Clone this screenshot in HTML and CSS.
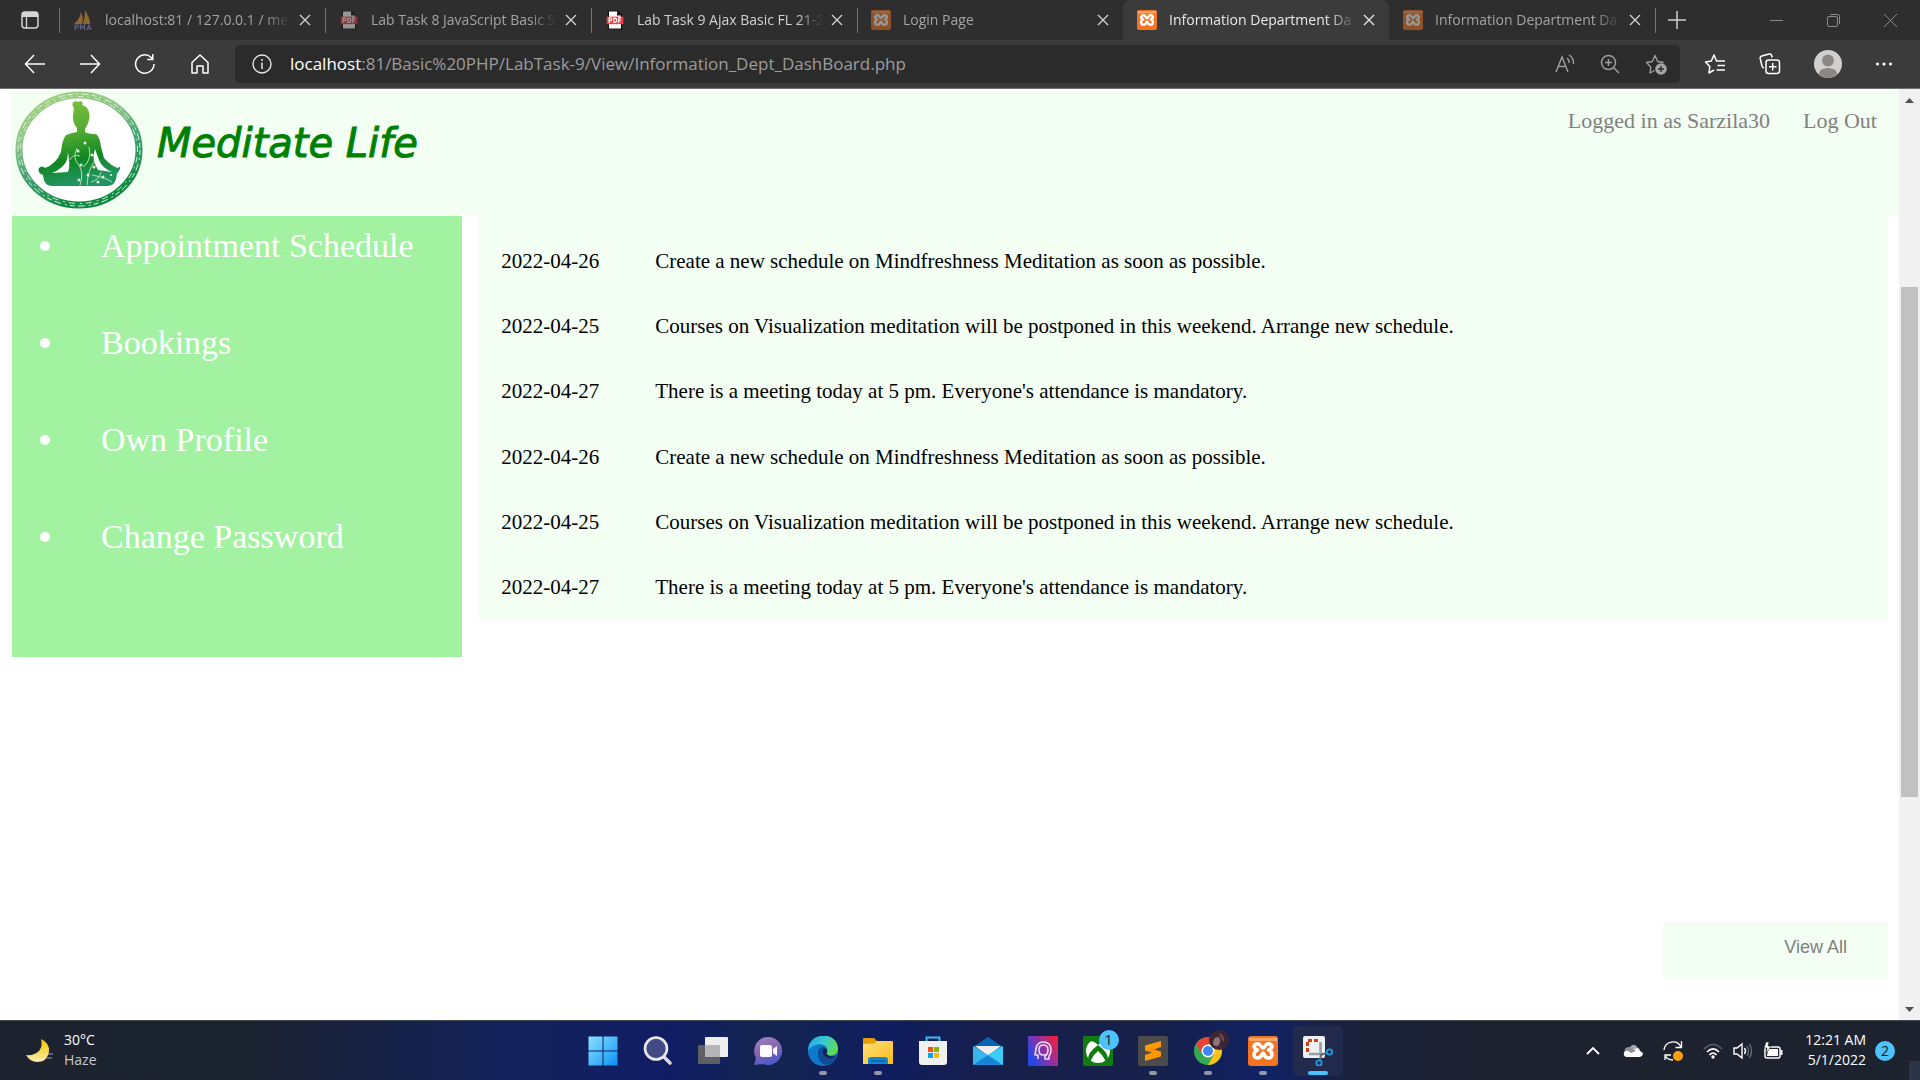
FILE: index.html
```html
<!DOCTYPE html>
<html lang="en">
<head>
<meta charset="utf-8">
<title>Information Department DashBoard</title>
<link rel="stylesheet" href="styles.css">
</head>
<body>
<svg class="sprite" aria-hidden="true">
  <symbol id="close" viewBox="0 0 12 12"><path d="M1 1l10 10M11 1L1 11" fill="none" stroke="currentColor" stroke-width="1.3"/></symbol>
  <symbol id="pdf" viewBox="0 0 20 24"><path d="M2 1h11l5 5v17H2z" fill="#fff" stroke="#111" stroke-width="1.6"/><path d="M12.500 1v5.500H18z" fill="#111"/><path d="M0 8h20v9H0z" fill="#f63a3d"/><path d="M3 15.500v-6h1.500a1.500 1.500 0 010 3.300H3M8.500 9.800v5h1a2 2 0 000-5zM14.500 15.500v-6h3M14.500 12.300h2.500" fill="none" stroke="#fff" stroke-width="1.400"/></symbol>
  <symbol id="xampp" viewBox="0 0 30 30"><rect width="30" height="30" rx="3" fill="#f47521"/><path d="M1 2h28v3H1z" fill="#fda768"/><path d="M8.500 8c-4.500 2-1.500 5.500 1 6-4 .8-5 8 0 8s4-5 5.500-5 .5 5 5.500 5 4-7.200 0-8c2.500-.5 5.500-4 1-6-4-1.500-4.500 4-6.500 4s-2.500-5.500-6.500-4z" fill="#f47521" stroke="#fff" stroke-width="3.600" stroke-linejoin="round"/></symbol>
</svg>

<header class="tabstrip">
  <button class="icon-btn tab-actions" aria-label="Tab actions"><svg width="20" height="20" viewBox="0 0 20 20"><rect x="2" y="2" width="16" height="16" rx="3" fill="none" stroke="#d6d6d6" stroke-width="1.500"/><path d="M2 7V4.500A2.500 2.500 0 014.500 2h11A2.500 2.500 0 0118 4.500V7z" fill="#d6d6d6"/><path d="M6.500 7v11" stroke="#d6d6d6" stroke-width="1.300"/></svg></button>
  <div class="tab tab-line dim">
    <svg class="favicon" viewBox="0 0 20 20"><path d="M1 14Q7 9 8 2q3 7 1 12zM10 14q2-7 2-14 5 8 5 14z" fill="#f0a030"/><path d="M2 20v-5h3v2.500H2M7.500 20v-5l2 3 2-3v5M14 20l2-5 2 5M15 18.500h3" fill="none" stroke="#8d90d0" stroke-width="1.200"/></svg>
    <span class="tab-title">localhost:81 / 127.0.0.1 / me</span>
    <button class="icon-btn close" aria-label="Close tab"><svg><use href="#close"/></svg></button>
  </div>
  <div class="tab tab-line dim">
    <svg class="favicon"><use href="#pdf"/></svg>
    <span class="tab-title">Lab Task 8 JavaScript Basic S</span>
    <button class="icon-btn close" aria-label="Close tab"><svg><use href="#close"/></svg></button>
  </div>
  <div class="tab tab-line">
    <svg class="favicon"><use href="#pdf"/></svg>
    <span class="tab-title">Lab Task 9 Ajax Basic FL 21-2</span>
    <button class="icon-btn close" aria-label="Close tab"><svg><use href="#close"/></svg></button>
  </div>
  <div class="tab tab-line dim">
    <svg class="favicon"><use href="#xampp"/></svg>
    <span class="tab-title">Login Page</span>
    <button class="icon-btn close" aria-label="Close tab"><svg><use href="#close"/></svg></button>
  </div>
  <div class="tab active">
    <svg class="favicon"><use href="#xampp"/></svg>
    <span class="tab-title">Information Department Da</span>
    <button class="icon-btn close" aria-label="Close tab"><svg><use href="#close"/></svg></button>
  </div>
  <div class="tab dim">
    <svg class="favicon"><use href="#xampp"/></svg>
    <span class="tab-title">Information Department Da</span>
    <button class="icon-btn close" aria-label="Close tab"><svg><use href="#close"/></svg></button>
  </div>
  <button class="icon-btn new-tab" aria-label="New tab"><svg width="18" height="18"><path d="M9 0v18M0 9h18" stroke="#d0d0d0" stroke-width="1.500"/></svg></button>
  <div class="window-controls">
    <button class="icon-btn" aria-label="Minimize"><svg width="13" height="13"><path d="M0 6.500h13" stroke="#8a8a8a"/></svg></button>
    <button class="icon-btn" aria-label="Restore"><svg width="13" height="13"><rect x=".5" y="2.500" width="10" height="10" rx="1.500" fill="none" stroke="#8a8a8a"/><path d="M3 .5h7.500q2 0 2 2V10" fill="none" stroke="#8a8a8a"/></svg></button>
    <button class="icon-btn" aria-label="Close"><svg width="13" height="13"><path d="M0 0l13 13M13 0L0 13" stroke="#8a8a8a"/></svg></button>
  </div>
</header>

<nav class="toolbar" aria-label="Browser">
  <button class="icon-btn nav-btn" aria-label="Back"><svg width="22" height="20"><path d="M21 10H1.500M10 1L1.500 10l8.500 9" fill="none" stroke="#fff" stroke-width="1.500"/></svg></button>
  <button class="icon-btn nav-btn" aria-label="Forward"><svg width="22" height="20"><path d="M1 10h19.500M12 1l8.500 9-8.500 9" fill="none" stroke="#fff" stroke-width="1.500"/></svg></button>
  <button class="icon-btn nav-btn" aria-label="Refresh"><svg width="22" height="22"><path d="M20 11a9.200 9.200 0 11-3-6.800L18.500 6M18.800 1v5.500h-5.500" fill="none" stroke="#fff" stroke-width="1.500"/></svg></button>
  <button class="icon-btn nav-btn" aria-label="Home"><svg width="20" height="22"><path d="M2 9.500L10 2l8 7.500V20h-5v-7H7v7H2z" fill="none" stroke="#fff" stroke-width="1.500" stroke-linejoin="round"/></svg></button>
  <div class="address">
    <button class="icon-btn" aria-label="Site information"><svg width="20" height="20"><circle cx="10" cy="10" r="9" fill="none" stroke="#e4e4e4" stroke-width="1.400"/><path d="M10 8.500V15M10 5v2" stroke="#e4e4e4" stroke-width="1.500"/></svg></button>
    <label class="host" for="url">localhost</label>
    <input class="url" id="url" value=":81/Basic%20PHP/LabTask-9/View/Information_Dept_DashBoard.php">
    <div class="address-tools">
      <button class="icon-btn" aria-label="Read aloud"><svg width="20" height="20"><path d="M1 18L7 3l6 15M3.500 12.500h7M12 4q2.500 2 2 5M14 1q5 3 4.500 9" fill="none" stroke="#9d9d9d" stroke-width="1.400"/></svg></button>
      <button class="icon-btn" aria-label="Zoom"><svg width="20" height="20"><circle cx="8.500" cy="8.500" r="7" fill="none" stroke="#9d9d9d" stroke-width="1.500"/><path d="M13.500 13.500L19 19M8.500 5v7M5 8.500h7" stroke="#9d9d9d" stroke-width="1.500"/></svg></button>
      <button class="icon-btn" aria-label="Add to favorites"><svg width="22" height="22"><path d="M9.500 17.500L5 20l.8-5.800L1.500 9.500l5.800-1L10 2.500l2.700 6 6 1" fill="none" stroke="#9d9d9d" stroke-width="1.400" stroke-linejoin="round"/><circle cx="16" cy="16" r="5.800" fill="#a5a5a5"/><path d="M16 13v6M13 16h6" stroke="#2b2b2b" stroke-width="1.400"/></svg></button>
    </div>
  </div>
  <div class="toolbar-tools">
    <button class="icon-btn" aria-label="Favorites"><svg width="22" height="22"><path d="M13.500 8H12.500L10 2 7.300 8 1.500 9l4.300 4.500L5 20l5-3M12.500 8H21M13.500 12.500H21M12.500 17H21" fill="none" stroke="#fff" stroke-width="1.500" stroke-linejoin="round"/></svg></button>
    <button class="icon-btn" aria-label="Collections"><svg width="22" height="22"><rect x="7" y="7" width="13.500" height="13.500" rx="2.500" fill="none" stroke="#fff" stroke-width="1.500"/><path d="M13.700 10v7.500M10 13.700h7.500M5 15q-1.500-.5-2-2L1.200 5.500q-.4-2 1.500-2.500l7.500-2q2-.3 2.500 1.500l.5 2" fill="none" stroke="#fff" stroke-width="1.500"/></svg></button>
    <button class="icon-btn" aria-label="Profile"><svg width="28" height="28"><circle cx="14" cy="14" r="14" fill="#d2d0ce"/><circle cx="14" cy="10.500" r="6" fill="#8b8785"/><path d="M4.500 24q1.500-6 9.500-6t9.500 6Q19 28 14 28t-9.500-4z" fill="#8b8785"/></svg></button>
    <button class="icon-btn" aria-label="Settings and more"><svg width="18" height="4"><g fill="#fff"><circle cx="2.500" cy="2" r="1.600"/><circle cx="9" cy="2" r="1.600"/><circle cx="15.500" cy="2" r="1.600"/></g></svg></button>
  </div>
</nav>

<div class="viewport">
  <div class="page">
    <header class="site-header">
      <svg class="logo" width="128" height="118" viewBox="0 0 128 118">
        <defs>
          <linearGradient id="ring" x1="0" y1="0" x2=".4" y2="1"><stop offset="0" stop-color="#a3d67c"/><stop offset=".4" stop-color="#8cc38a"/><stop offset=".65" stop-color="#41a374"/><stop offset="1" stop-color="#108a40"/></linearGradient>
          <linearGradient id="figure" x1="0" y1="0" x2=".2" y2="1"><stop offset="0" stop-color="#83c340"/><stop offset=".45" stop-color="#4faa32"/><stop offset=".75" stop-color="#108622"/><stop offset="1" stop-color="#219561"/></linearGradient>
        </defs>
        <ellipse cx="64" cy="59" rx="60" ry="55" fill="#fff" stroke="url(#ring)" stroke-width="7"/>
        <ellipse cx="64" cy="59" rx="61" ry="56" fill="none" stroke="#e0f3df" stroke-width="1" stroke-dasharray="5 3 2 4 7 3"/>
        <ellipse cx="64" cy="59" rx="58.500" ry="53.500" fill="none" stroke="#d3ecd5" stroke-width="1" stroke-dasharray="2 5 6 4"/>
        <path d="M59 17C55 12 60 9 63 11 66 9 69 12 67 14 75 16 76 26 73 32 72 35 71 36 70 38V41Q73 43 81 43 85 46 86 56L89 67Q96 75 103 77 106 74 105 78L102 83Q101 95 93 95H36Q29 95 28 84 22 82 24 77 27 74 30 77 41 73 46 61 47 49 51 44 56 42 62 41V37Q57 31 58 24z" fill="url(#figure)"/>
        <path d="M52 57q2 7-1 14-4 7-14 11l16-1q3-7-1-24zM80 58q-3 9 0 15l3 6 14 2q-10-4-13-12z" fill="#fff"/>
        <path d="M65 94q4-12-1-20-7-6-2-17M72 94q1-15 7-23M76 91q8-2 10-10M68 76q9-6 6-20M65 65q-8-2-10 4M77 84q15 3 20 7" fill="none" stroke="#b7dfad" stroke-width="1"/>
        <g fill="#e4f6df"><circle cx="70" cy="52" r="1.500"/><circle cx="63" cy="60" r="1.500"/><circle cx="77" cy="64" r="1.500"/><circle cx="66" cy="74" r="1.500"/><circle cx="79" cy="76" r="1.500"/><circle cx="73" cy="84" r="1.500"/><circle cx="88" cy="86" r="1.500"/><circle cx="64" cy="89" r="1.500"/><circle cx="83" cy="91" r="1.500"/><circle cx="96" cy="84" r="1"/></g>
      </svg>
      <h1 class="brand">Meditate Life</h1>
      <div class="account">
        <a href="#profile">Logged in as Sarzila30</a>
        <a href="#logout">Log Out</a>
      </div>
    </header>
    <div class="columns">
      <ul class="menu">
        <li><a href="#schedule">Appointment Schedule</a></li>
        <li><a href="#bookings">Bookings</a></li>
        <li><a href="#own">Own Profile</a></li>
        <li><a href="#password">Change Password</a></li>
      </ul>
      <main class="notices">
        <table>
          <tbody>
          <tr><td class="date">2022-04-26</td><td>Create a new schedule on Mindfreshness Meditation as soon as possible.</td></tr>
          <tr><td class="date">2022-04-25</td><td>Courses on Visualization meditation will be postponed in this weekend. Arrange new schedule.</td></tr>
          <tr><td class="date">2022-04-27</td><td>There is a meeting today at 5 pm. Everyone's attendance is mandatory.</td></tr>
          <tr><td class="date">2022-04-26</td><td>Create a new schedule on Mindfreshness Meditation as soon as possible.</td></tr>
          <tr><td class="date">2022-04-25</td><td>Courses on Visualization meditation will be postponed in this weekend. Arrange new schedule.</td></tr>
          <tr><td class="date">2022-04-27</td><td>There is a meeting today at 5 pm. Everyone's attendance is mandatory.</td></tr>
          </tbody>
        </table>
      </main>
    </div>
    <button class="view-all">View All</button>
  </div>
  <div class="scrollbar" aria-hidden="true">
    <svg viewBox="0 0 21 21"><path d="M6 14h9l-4.500-5z" fill="#505050"/></svg>
    <div class="track-above"></div>
    <div class="thumb"></div>
    <div class="track-below"></div>
    <svg viewBox="0 0 21 21"><path d="M6 8h9l-4.500 5z" fill="#505050"/></svg>
  </div>
</div>

<footer class="taskbar">
  <button class="weather">
    <svg width="28" height="26" viewBox="0 0 28 26"><defs><linearGradient id="moon" x1="0" y1="0" x2="0" y2="1"><stop offset="0" stop-color="#fbc60a"/><stop offset=".5" stop-color="#f9d84d"/><stop offset="1" stop-color="#ffedb5"/></linearGradient></defs><path d="M20 16h7M19 20h7" stroke="#566275" stroke-width="2"/><path d="M15 1q9 4 8 13-2 10-12 10-7 0-11-7 8 1 13-4 4-5 2-12z" fill="url(#moon)"/></svg>
    <span class="weather-text"><span>30°C</span><span class="haze">Haze</span></span>
  </button>
  <div class="apps">
    <button class="app" aria-label="Start"><svg viewBox="0 0 30 30"><defs><linearGradient id="win" x1="0" y1="0" x2="1" y2="1"><stop offset="0" stop-color="#8be4ff"/><stop offset="1" stop-color="#0c90f4"/></linearGradient></defs><path d="M.5.500h14v14h-14zM15.500.500h14v14h-14zM.5 15.500h14v14h-14zM15.500 15.500h14v14h-14z" fill="url(#win)"/></svg></button>
    <button class="app" aria-label="Search"><svg viewBox="0 0 30 30"><path d="M20 20l7 7" stroke="#d9d9de" stroke-width="3.600" stroke-linecap="round"/><circle cx="13" cy="12.500" r="11" fill="#414a83" stroke="#e8e8ea" stroke-width="2.600"/></svg></button>
    <button class="app" aria-label="Task view"><svg viewBox="0 0 30 30"><rect x="0" y="9" width="22" height="19" rx="1" fill="#5d6067"/><rect x="7" y="1" width="23" height="20" rx="1" fill="#eee"/><path d="M7 9h15v12H7z" fill="#b5b5b7"/></svg></button>
    <button class="app" aria-label="Chat"><svg viewBox="0 0 30 30"><defs><linearGradient id="chat" x1="0" y1="0" x2=".4" y2="1"><stop offset="0" stop-color="#8e8bd6"/><stop offset=".4" stop-color="#956bae"/><stop offset="1" stop-color="#5059c9"/></linearGradient></defs><path d="M1 29l2-7A14 14 0 1110 28z" fill="url(#chat)"/><rect x="7" y="9" width="12" height="12" rx="2" fill="#fff"/><path d="M20 13l4-3v10l-4-3z" fill="#fff"/></svg></button>
    <button class="app running" aria-label="Microsoft Edge"><svg viewBox="0 0 30 30"><defs><linearGradient id="edge" x1="0" y1=".2" x2="1" y2=".6"><stop offset="0" stop-color="#23a9e8"/><stop offset=".5" stop-color="#35c9cf"/><stop offset="1" stop-color="#65dd4a"/></linearGradient></defs><circle cx="15" cy="15" r="15" fill="#0d79cb"/><path d="M0 14C1-5 30-5 30 13c0 8-13 8-11 4 3-9-10-13-19-3z" fill="url(#edge)"/><path d="M10 17c0-5 5-8 8-5-3-1-4 4-3 6 2 4 8 5 14 2-5 12-19 12-19-3z" fill="#114a96"/><path d="M15.500 12q5 0 3 6 4 4 11 1-7 6-13 1-3-3-1-8z" fill="#122252"/></svg></button>
    <button class="app running" aria-label="File Explorer"><svg viewBox="0 0 30 30"><defs><linearGradient id="folder" x1="0" y1="0" x2="1" y2="1"><stop offset="0" stop-color="#ffe07a"/><stop offset="1" stop-color="#ffbd1b"/></linearGradient></defs><path d="M0 3q0-1 1-1h10l3 3v6H0z" fill="#e69e00"/><path d="M0 8l11-.500 3-2.500h15q1 0 1 1v22H0z" fill="url(#folder)"/><path d="M5 28v-4q0-3 3-3h14q3 0 3 3v4z" fill="#1385d1"/><path d="M8 25h14" stroke="#0765a8" stroke-width="1.500"/></svg></button>
    <button class="app" aria-label="Microsoft Store"><svg viewBox="0 0 30 30"><path d="M8.500 6V1.500h13V6" fill="none" stroke="#35bdf3" stroke-width="2"/><path d="M1 5h28v21q0 3-3 3H4q-3 0-3-3z" fill="#f0f0f1"/><path d="M10 11h5v5h-5z" fill="#f25022"/><path d="M16 11h5v5h-5z" fill="#7fba00"/><path d="M10 17h5v5h-5z" fill="#00a4ef"/><path d="M16 17h5v5h-5z" fill="#ffb900"/></svg></button>
    <button class="app" aria-label="Mail"><svg viewBox="0 0 30 30"><path d="M0 11L15 1l15 10v3H0z" fill="#0864b5"/><path d="M2 10h26L15 20z" fill="#eee"/><path d="M0 10l15 9 15-9v19H0z" fill="#37b6ee"/><path d="M0 29l15-10 15 10z" fill="#1783d6"/><path d="M30 10v19L15 19z" fill="#3bcdf8"/></svg></button>
    <button class="app" aria-label="Head app"><svg viewBox="0 0 30 30"><defs><linearGradient id="head" x1="0" y1=".6" x2="1" y2="0"><stop offset="0" stop-color="#2449e8"/><stop offset=".5" stop-color="#9a2da0"/><stop offset="1" stop-color="#ff2029"/></linearGradient></defs><path d="M0 0h30v30H0z" fill="url(#head)"/><path d="M10 23v-4H7l1-6q1-7 7-7 8 0 8 8 0 4-2 6v3h-4v-3q3-2 3-6 0-5-5-5-4 0-4 5t4 5h3" fill="none" stroke="#eadcf5" stroke-width="1.600" stroke-linejoin="round"/></svg></button>
    <button class="app" aria-label="Xbox"><svg viewBox="0 0 30 30"><rect width="30" height="30" rx="2" fill="#107c10"/><circle cx="15" cy="15" r="12" fill="#fff"/><path d="M7 5q4 0 8 4 4-4 8-4-4-3-8-3T7 5zM15 9q11 8 10 15-1 3-3 0-2-5-7-9-5 4-7 9-2 3-3 0Q4 17 15 9z" fill="#107c10"/></svg><span class="count">1</span></button>
    <button class="app running" aria-label="Sublime Text"><svg viewBox="0 0 30 30"><rect width="30" height="30" rx="2" fill="#4b4b4b"/><path d="M7 9.500L23 5v6l-7 2.500 7 2v5L7 25v-6l7-2.500-7-2z" fill="#ff9800"/></svg></button>
    <button class="app running" aria-label="Google Chrome"><svg viewBox="0 0 30 30"><circle cx="15" cy="15" r="14" fill="#34a853"/><path d="M3 8a14 14 0 0124.100 0H15L9 18z" fill="#ea4335"/><path d="M15 8h12.100A14 14 0 0115 29l6-11z" fill="#fbc116"/><circle cx="15" cy="15" r="6.500" fill="#fff"/><circle cx="15" cy="15" r="5" fill="#4285f4"/></svg><svg class="avatar" viewBox="0 0 20 20"><circle cx="10" cy="10" r="10" fill="#3c2632"/><path d="M4 14q0-7 5-7 4 2 1 8-3 3-6-1z" fill="#93717a"/><path d="M10 3q6 2 5 9-4-3-5-9z" fill="#6c474f"/></svg></button>
    <button class="app running" aria-label="XAMPP"><svg viewBox="0 0 30 30"><use href="#xampp"/></svg></button>
    <button class="app running current" aria-label="Snipping Tool"><svg viewBox="0 0 30 30"><rect width="22" height="22" rx="2" fill="#eef0f1"/><path d="M4.500 16V4.500H17" fill="none" stroke="#d83b12" stroke-width="3" stroke-dasharray="4 2"/><path d="M17.500 6v13M6 18h14" stroke="#9b9ea1" stroke-width="2.600"/><path d="M17 19l7-2M18 19l-1 5" stroke="#5a6b76" stroke-width="2"/><circle cx="26.500" cy="16" r="2.700" fill="none" stroke="#1e9ce4" stroke-width="1.800"/><circle cx="16" cy="27" r="2.700" fill="none" stroke="#1e9ce4" stroke-width="1.800"/></svg></button>
  </div>
  <div class="tray">
    <button class="icon-btn tray-app" aria-label="Show hidden icons"><svg width="14" height="10"><path d="M1 8l6-6 6 6" fill="none" stroke="#fff" stroke-width="1.800"/></svg></button>
    <button class="icon-btn tray-app" aria-label="OneDrive"><svg width="20" height="14"><path d="M4 10Q0 8 3 4q3-1 4-1 4-5 8 1l-8 6z" fill="#a5a8ad"/><path d="M3 13q-4-2-1-6 3-1 5 0l5-2q4-3 5 2 3 1 3 3-1 3-4 3z" fill="#fff"/><path d="M2 7q-1-2 1-3 3-1 4-1l6 4-5 2q-3-3-6-2z" fill="#8c9096"/></svg></button>
    <button class="icon-btn tray-app" aria-label="Sync"><svg width="22" height="22"><path d="M2 10a9 9 0 0117-3M19.500 1v6.500h-6M3 20v-5h6M3 15q2 5 8 5" fill="none" stroke="#fff" stroke-width="1.300"/><circle cx="16" cy="16" r="5" fill="#ff9d0a"/></svg></button>
    <button class="icon-btn status" aria-label="Network, volume and battery">
      <svg width="20" height="16"><path d="M1 6q9-9 18 0" fill="none" stroke="#596171" stroke-width="1.500"/><path d="M4 9q6-6 12 0M6.500 12q3.500-4 7 0" fill="none" stroke="#fff" stroke-width="1.700"/><circle cx="10" cy="14" r="1.700" fill="#fff"/></svg>
      <svg width="20" height="18"><path d="M1 6h3l5-4v14l-5-4H1z" fill="none" stroke="#fff" stroke-width="1.400"/><path d="M11.500 6q2 3 0 6" fill="none" stroke="#fff" stroke-width="1.400"/><path d="M14 4q3 5 0 10M16.500 2q4 7 0 14" fill="none" stroke="#687080" stroke-width="1.300"/></svg>
      <svg width="20" height="18"><rect x="2" y="5" width="15" height="11" rx="2" fill="none" stroke="#fff" stroke-width="1.500"/><path d="M5 7h10v7H4z" fill="#fff"/><path d="M18.500 8v5" stroke="#fff" stroke-width="2"/><path d="M3 0L1 6h3l-1 6 5-8H5l1-4z" fill="#fff" stroke="#1c222e" stroke-width=".6"/></svg>
    </button>
    <div class="clock"><span>12:21 AM</span><span>5/1/2022</span></div>
    <span class="notifications">2</span>
    <button class="show-desktop" aria-label="Show desktop"></button>
  </div>
</footer>
</body>
</html>
```

FILE: styles.css
```css
* { box-sizing: border-box; }

body {
  margin: 0;
  min-height: 100vh;
  display: flex;
  flex-direction: column;
  background: #fff;
  font-family: "Segoe UI", "Open Sans", sans-serif;
}

button { border: 0; padding: 0; background: none; font: inherit; color: inherit; }
a { color: inherit; text-decoration: none; }
svg { display: block; flex: none; }
.sprite { position: absolute; width: 0; height: 0; }
.icon-btn { display: flex; align-items: center; justify-content: center; flex: none; }

/* Tab strip */
.tabstrip { display: flex; height: 40px; background: #2e2e2e; color: #d2d2d2; font-size: 14px; }
.tab-actions { width: 59px; }
.tab {
  display: flex;
  align-items: center;
  flex: 0 1 266px;
  min-width: 0;
  padding: 0 14px;
  position: relative;
}
.tab-line::before, .new-tab::before {
  content: "";
  position: absolute;
  left: 0;
  top: 8px;
  width: 1px;
  height: 25px;
  background: #757575;
}
.favicon { width: 20px; height: 20px; margin-right: 12px; }
.dim .favicon { opacity: .5; }
.dim .tab-title { color: #a3a3a3; }
.tab-title {
  flex: 1;
  min-width: 0;
  overflow: hidden;
  white-space: nowrap;
  line-height: 20px;
  -webkit-mask-image: linear-gradient(to right, #000 86%, transparent);
  mask-image: linear-gradient(to right, #000 86%, transparent);
}
.close { width: 12px; height: 12px; margin-left: 8px; }
.close svg { width: 12px; height: 12px; }
.active { background: #3b3b3b; border-radius: 8px 8px 0 0; color: #e8e8e8; }
.new-tab { position: relative; width: 44px; }
.window-controls { display: flex; margin-left: auto; padding-right: 1px; }
.window-controls button { width: 57px; }

/* Toolbar */
.toolbar {
  display: flex;
  align-items: center;
  height: 49px;
  padding-left: 7px;
  background: #3b3b3b;
  border-bottom: 1px solid #707070;
}
.nav-btn { width: 55px; }
.address {
  display: flex;
  align-items: center;
  flex: 1;
  height: 38px;
  margin-left: 8px;
  padding: 0 13px 0 17px;
  border-radius: 5px;
  background: #2b2b2b;
  font-size: 17px;
  line-height: 24px;
}
.host, .url { padding: 0 0 1px; }
.host { margin-left: 18px; color: #fff; }
.url { flex: 1; min-width: 0; border: 0; outline: 0; background: none; color: #9c9c9c; font: inherit; }
.address-tools { display: flex; gap: 25px; }
.toolbar-tools { display: flex; align-items: center; width: 240px; padding-left: 24px; gap: 33px; }

/* Page */
.viewport { display: grid; grid-template-columns: minmax(0, 1fr) 21px; flex: 1; }
.page {
  display: flex;
  flex-direction: column;
  padding: 0 0 43px 11px;
  font-family: "Times New Roman", "Liberation Serif", serif;
}
.site-header { display: flex; align-items: flex-start; height: 127px; padding: 2px 22px 0 4px; background: #f3fff3; }
.brand {
  margin: 28px 0 0 14px;
  color: green;
  font: italic 40px/48px "Lucida Handwriting", "DejaVu Sans", cursive;
  -webkit-text-stroke: 1px green;
}
.account { display: flex; gap: 33px; margin: 17px 0 0 auto; color: gray; font-size: 22px; line-height: 25px; }
.columns { display: flex; align-items: flex-start; padding: 0 11px 0 1px; }
.menu {
  flex: 0 0 24%;
  margin: 0;
  padding: 10px 0 43px 28px;
  list-style: none;
  background: #a2f2a2;
  color: #fff;
  font-size: 34px;
  line-height: 39px;
}
.menu li { display: flex; align-items: center; gap: 51px; padding-bottom: 58px; }
.menu li::before { content: ""; width: 10px; height: 10px; border-radius: 50%; background: #fff; }
.notices { flex: 1; margin-left: 17px; padding: 12px 22px 0; background: #f3fff3; }
.notices table { width: 100%; height: 392px; border-collapse: collapse; font-size: 21px; line-height: 24px; }
.notices td { padding: 0; }
.notices .date { width: 154px; }
.view-all {
  width: 225px;
  height: 55px;
  margin: auto 11px 0 auto;
  padding: 0 41px 5px 0;
  background: #f3fff3;
  color: gray;
  font: 18px/22px Arial, "Liberation Sans", sans-serif;
  text-align: right;
}

.scrollbar { display: flex; flex-direction: column; background: #f1f1f1; }
.track-above { flex: 177; }
.thumb { flex: 510; margin: 0 2px; background: #c1c1c1; }
.track-below { flex: 202; }

/* Taskbar */
.taskbar {
  display: grid;
  grid-template-columns: 1fr auto 1fr;
  align-items: center;
  height: 60px;
  border-top: 1px solid #43464d;
  background: linear-gradient(to right, #1c222e 0, #1b2230 13%, #14225a 26%, #101d64 35%, #14254f 40%, #101d60 46%, #17204a 52%, #16204a 60%, #112265 66%, #1a2138 71%, #1c222e 78%);
  color: #fff;
  font-size: 14px;
  line-height: 20px;
}
.weather { display: flex; align-items: center; gap: 10px; padding-left: 26px; text-align: left; }
.weather-text, .clock { display: flex; flex-direction: column; padding-bottom: 2px; }
.haze { color: #c5c8cc; }
.apps { display: flex; gap: 5px; }
.app { position: relative; display: flex; align-items: center; justify-content: center; width: 50px; height: 50px; border-radius: 5px; }
.app > svg { width: 30px; height: 30px; }
.running::after { content: ""; position: absolute; bottom: 1px; width: 8px; height: 4px; border-radius: 2px; background: #9298aa; }
.current { background: #222b4e; }
.current::after { width: 20px; background: #4cc2ff; }
.count, .notifications { border-radius: 50%; background: #4cc2ff; color: #101820; text-align: center; }
.count { position: absolute; top: 4px; right: 4px; width: 20px; height: 20px; }
.app > .avatar { position: absolute; top: 4px; right: 4px; width: 20px; height: 20px; }
.tray { display: flex; align-items: center; justify-content: flex-end; height: 100%; }
.tray-app { width: 40px; }
.status { gap: 10px; margin: 0 22px 0 10px; }
.clock { text-align: right; }
.notifications { width: 20px; height: 20px; margin: 0 14px 0 9px; }
.show-desktop { align-self: flex-end; width: 11px; height: 19px; background: #2c3447; }
```
